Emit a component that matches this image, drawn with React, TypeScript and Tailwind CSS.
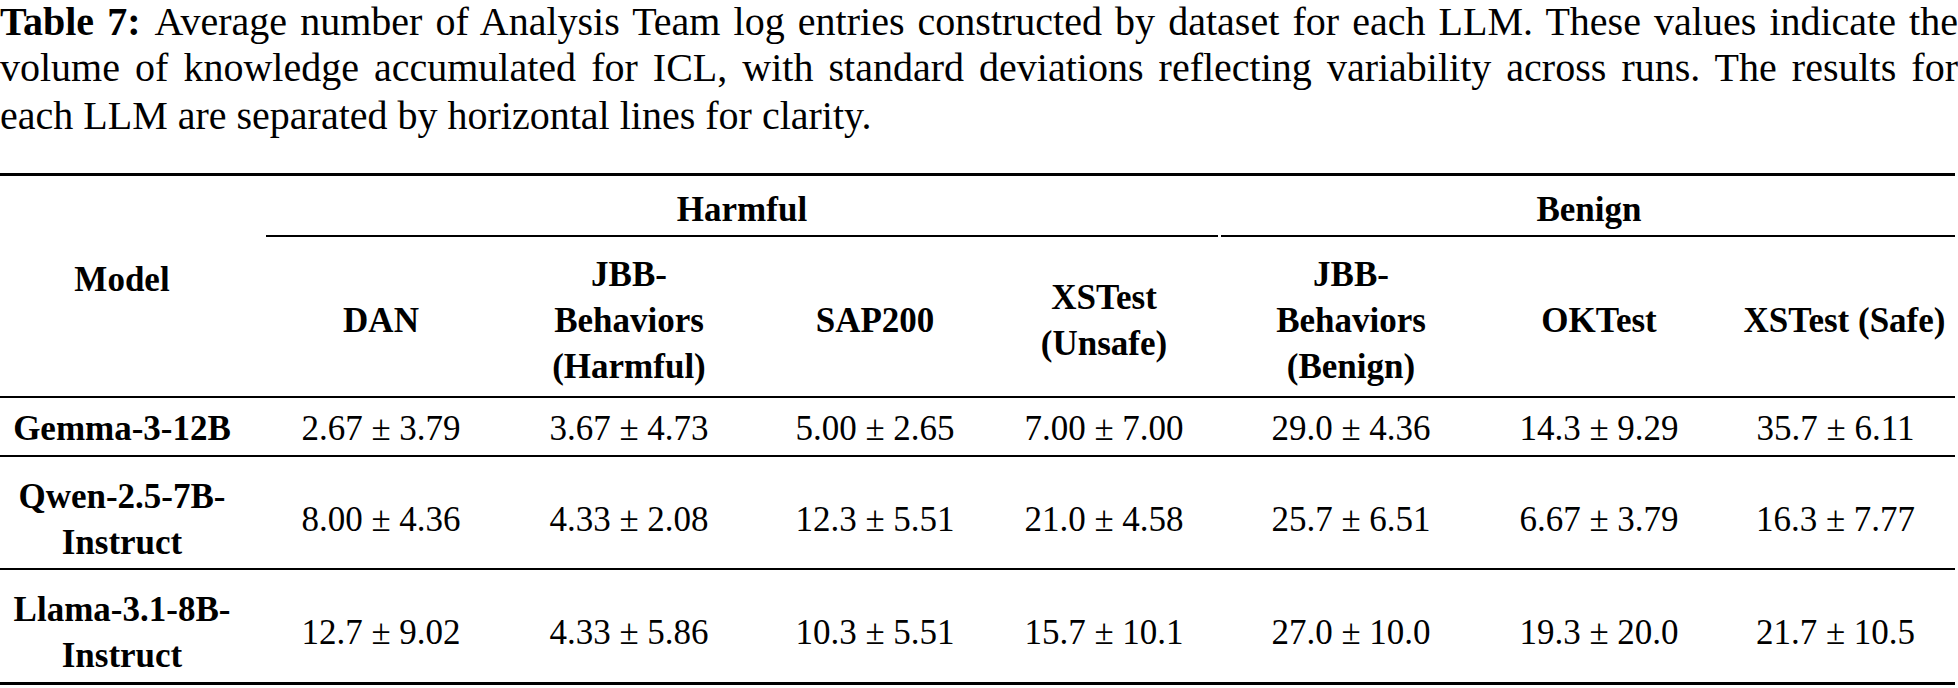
import React from "react";

const rows: { m: string[]; v: string[]; cls: string }[] = [
  {
    m: ["Gemma-3-12B"],
    v: ["2.67 ± 3.79", "3.67 ± 4.73", "5.00 ± 2.65", "7.00 ± 7.00", "29.0 ± 4.36", "14.3 ± 9.29", "35.7 ± 6.11"],
    cls: "border-b-2 border-black pt-[4px]",
  },
  {
    m: ["Qwen-2.5-7B-", "Instruct"],
    v: ["8.00 ± 4.36", "4.33 ± 2.08", "12.3 ± 5.51", "21.0 ± 4.58", "25.7 ± 6.51", "6.67 ± 3.79", "16.3 ± 7.77"],
    cls: "border-b-2 border-black pt-[15px]",
  },
  {
    m: ["Llama-3.1-8B-", "Instruct"],
    v: ["12.7 ± 9.02", "4.33 ± 5.86", "10.3 ± 5.51", "15.7 ± 10.1", "27.0 ± 10.0", "19.3 ± 20.0", "21.7 ± 10.5"],
    cls: "pt-[14px]",
  },
];

const heads: string[][] = [
  ["DAN"],
  ["JBB-", "Behaviors", "(Harmful)"],
  ["SAP200"],
  ["XSTest", "(Unsafe)"],
  ["JBB-", "Behaviors", "(Benign)"],
  ["OKTest"],
  ["XSTest (Safe)"],
];

function Lines({ lines }: { lines: string[] }) {
  return (
    <div className="text-center">
      {lines.map((l, i) => (
        <div key={i} className="whitespace-nowrap">
          {l}
        </div>
      ))}
    </div>
  );
}

export default function App() {
  return (
    <div className="w-[1958px] h-[688px] overflow-hidden bg-white text-black [font-family:'Liberation_Serif','Times_New_Roman',serif]">
      <div className="text-[40px]">
        <div className="leading-[44px] text-justify [text-align-last:justify]">
          <span className="font-bold">Table 7:</span>
          <span className="inline-block w-[14px]"></span>
          Average number of Analysis Team log entries constructed by dataset for each LLM. These values indicate the
        </div>
        <div className="leading-[48px] text-justify [text-align-last:justify]">
          volume of knowledge accumulated for ICL, with standard deviations reflecting variability across runs. The results for
        </div>
        <div className="leading-[48px]">each LLM are separated by horizontal lines for clarity.</div>
      </div>

      <div className="mt-[33px] w-[1955px] border-t-[3px] border-b-[3px] border-black grid grid-cols-[266px_230px_266px_226px_232px_262px_234px_239px] grid-rows-[61px_161px_59px_113px_112px] text-[35px] leading-[46px]">
        <div className="row-span-2 border-b-2 border-black flex items-center justify-center pr-[22px] pb-[12px] font-bold">
          Model
        </div>
        <div className="col-span-4 mr-[2px] border-b-2 border-black flex items-center justify-center pt-[8px] font-bold">
          Harmful
        </div>
        <div className="col-span-3 ml-[1px] border-b-2 border-black flex items-center justify-center pt-[8px] pl-[2px] font-bold">
          Benign
        </div>

        {heads.map((h, i) => (
          <div
            key={i}
            className={
              i === 6
                ? "border-b-2 border-black flex items-center justify-center pt-[9px] pl-[18px] font-bold"
                : "border-b-2 border-black flex items-center justify-center pt-[9px] font-bold"
            }
          >
            <Lines lines={h} />
          </div>
        ))}

        {rows.map((r, ri) => (
          <React.Fragment key={ri}>
            <div className={`${r.cls} flex items-center justify-center pr-[22px] font-bold`}>
              <Lines lines={r.m} />
            </div>
            {r.v.map((v, vi) => (
              <div key={vi} className={`${r.cls} flex items-center justify-center whitespace-nowrap`}>
                {v}
              </div>
            ))}
          </React.Fragment>
        ))}
      </div>
    </div>
  );
}
